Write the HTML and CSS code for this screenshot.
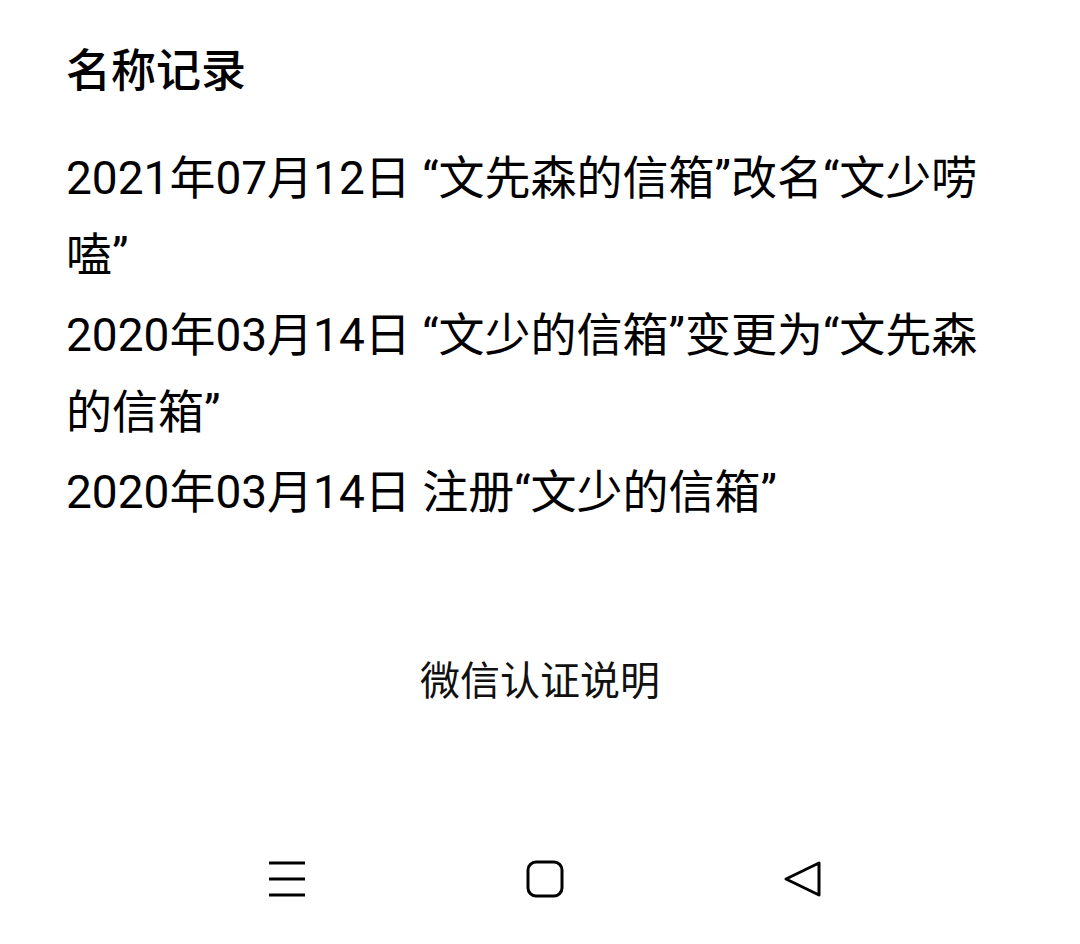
FILE: index.html
```html
<!DOCTYPE html>
<html lang="zh-CN">
<head>
<meta charset="utf-8">
<title>名称记录</title>
<link rel="stylesheet" href="styles.css">
</head>
<body>
<div class="page">
  <section class="records">
    <h1 class="title">名称记录</h1>
    <p class="record">2021年07月12日 “文先森的信箱”改名“文少唠嗑”</p>
    <p class="record">2020年03月14日 “文少的信箱”变更为“文先森的信箱”</p>
    <p class="record">2020年03月14日 注册“文少的信箱”</p>
  </section>
  <div class="footer-link">微信认证说明</div>
  <nav class="navbar">
    <div class="nav-cell">
      <svg width="38" height="36" viewBox="0 0 38 36"><g stroke="#000" stroke-width="3"><line x1="1" y1="2" x2="37" y2="2"/><line x1="1" y1="18" x2="37" y2="18"/><line x1="1" y1="34" x2="37" y2="34"/></g></svg>
    </div>
    <div class="nav-cell">
      <svg width="38" height="38" viewBox="0 0 38 38"><rect x="2" y="2" width="34" height="34" rx="8" fill="none" stroke="#000" stroke-width="3"/></svg>
    </div>
    <div class="nav-cell">
      <svg width="40" height="38" viewBox="0 0 40 38"><path d="M3 19 L36 3 L36 35 Z" fill="none" stroke="#000" stroke-width="3" stroke-linejoin="round"/></svg>
    </div>
  </nav>
</div>
</body>
</html>
```

FILE: styles.css
```css
html, body {
  margin: 0;
  padding: 0;
  background: #fff;
}
body {
  font-family: Roboto, "Noto Sans CJK SC", sans-serif;
  color: #000;
}
.page {
  height: 944px;
  display: flex;
  flex-direction: column;
}
.records {
  padding: 42px 66px 0 66px;
}
.title {
  margin: 0;
  font-size: 45px;
  line-height: 60px;
  font-weight: 500;
}
.record {
  margin: 0 0 3px 0;
  font-size: 46px;
  line-height: 77px;
}
.title + .record {
  margin-top: 38px;
}
.footer-link {
  margin-top: 120px;
  text-align: center;
  font-size: 40px;
  line-height: 56px;
  color: #111;
}
.navbar {
  margin-top: auto;
  height: 90px;
  margin-bottom: 20px;
  display: flex;
  justify-content: center;
  align-items: center;
  padding-left: 10px;
}
.nav-cell {
  width: 258px;
  display: flex;
  justify-content: center;
  align-items: center;
}
.nav-cell svg {
  display: block;
}
```
